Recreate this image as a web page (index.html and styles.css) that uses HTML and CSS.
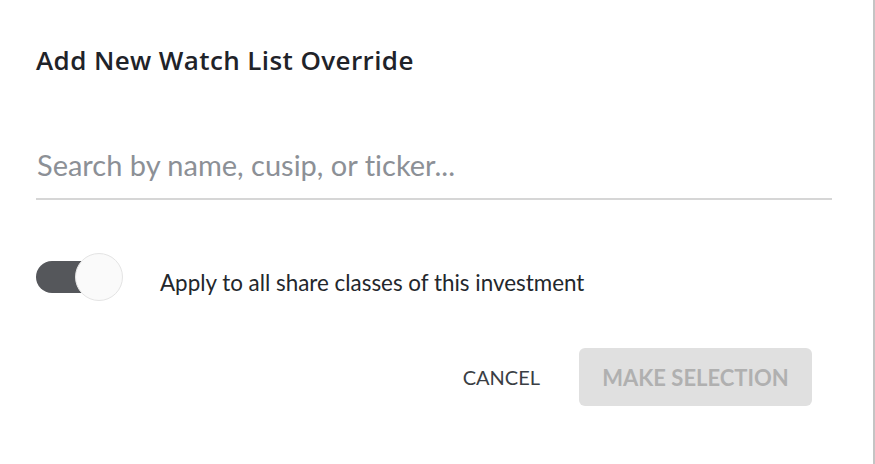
FILE: index.html
```html
<!DOCTYPE html>
<html>
<head>
<meta charset="utf-8">
<link rel="stylesheet" href="styles.css">
</head>
<body>
<div class="dialog">
  <h1 class="title">Add New Watch List Override</h1>
  <div class="search">
    <input class="search-input" type="text" placeholder="Search by name, cusip, or ticker...">
  </div>
  <div class="toggle-row">
    <span class="toggle"><span class="track"></span><span class="thumb"></span></span>
    <span class="toggle-label">Apply to all share classes of this investment</span>
  </div>
  <div class="actions">
    <button class="btn-cancel">CANCEL</button>
    <button class="btn-primary" disabled>MAKE SELECTION</button>
  </div>
</div>
</body>
</html>
```
FILE: styles.css
```css
html, body {
  margin: 0;
  padding: 0;
  background: #ffffff;
}
body {
  font-family: Lato, "Noto Sans", sans-serif;
  color: #22262b;
  font-variant-ligatures: none;
}
.dialog {
  box-sizing: border-box;
  width: 875px;
  height: 464px;
  padding: 40px 41px 0 36px;
  border-right: 2px solid #c4c4c4;
}
.title {
  margin: 0;
  font-family: "Open Sans", sans-serif;
  font-size: 26px;
  font-weight: 600;
  letter-spacing: 0.4px;
  line-height: 40px;
  color: #1f2329;
}
.search {
  margin-top: 55px;
  border-bottom: 2px solid #d6d6d6;
}
.search-input {
  display: block;
  width: 100%;
  box-sizing: border-box;
  border: 0;
  outline: none;
  padding: 0 0 5px 1px;
  height: 63px;
  font-family: Lato, "Noto Sans", sans-serif;
  font-size: 29px;
  font-variant-ligatures: none;
  color: #333;
  background: transparent;
}
.search-input::placeholder {
  color: #8c9096;
}
.toggle-row {
  display: flex;
  align-items: center;
  margin-top: 52px;
  height: 50px;
}
.toggle {
  position: relative;
  width: 88px;
  height: 50px;
  flex: none;
}
.track {
  position: absolute;
  left: 0;
  top: 9px;
  width: 74px;
  height: 32px;
  border-radius: 16px;
  background: #55575b;
}
.thumb {
  position: absolute;
  left: 39px;
  top: 1px;
  width: 46px;
  height: 46px;
  border-radius: 50%;
  background: #fafafa;
  border: 1px solid #e4e4e4;
}
.toggle-label {
  margin-left: 36px;
  font-size: 22.4px;
  color: #23272c;
  padding-top: 11px;
}
.actions {
  display: flex;
  justify-content: flex-end;
  align-items: center;
  gap: 39px;
  margin-top: 46px;
  padding-right: 20px;
}
.btn-cancel {
  border: 0;
  background: transparent;
  font-family: Lato, "Noto Sans", sans-serif;
  font-size: 20px;
  color: #3a3e44;
  padding: 0;
}
.btn-primary {
  width: 233px;
  height: 58px;
  border: 0;
  border-radius: 6px;
  background: #e0e0e0;
  font-family: Lato, "Noto Sans", sans-serif;
  font-size: 22px;
  font-weight: 700;
  color: #b0b0b0;
  padding: 0;
}
```
